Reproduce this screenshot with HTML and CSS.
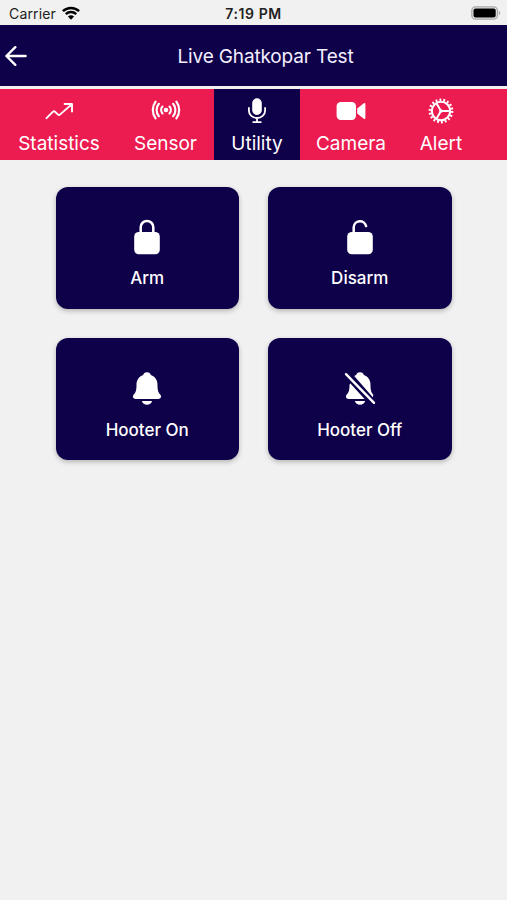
FILE: index.html
```html
<!DOCTYPE html>
<html lang="en">
<head>
    <meta charset="utf-8">
    <title>Live Ghatkopar Test</title>
    <link rel="stylesheet" href="styles.css">
</head>
<body>
<div class="status">
    <div class="carrier">
        <span>Carrier</span>
        <svg width="18" height="14" viewBox="0 0 18 14" fill="none" stroke="#000" stroke-width="2.5">
            <path d="M.9 5.1a11.8 11.8 0 0 1 16.2 0"/>
            <path d="M3.8 8.2a7.5 7.5 0 0 1 10.4 0"/>
            <path d="M9 13.7L5.9 10.6a4.5 4.5 0 0 1 6.2 0z" fill="#000" stroke="none"/>
        </svg>
    </div>
    <div class="time">7:19 PM</div>
    <div class="battery">
        <svg width="30" height="14" viewBox="0 0 30 14">
            <rect x=".8" y=".8" width="25.6" height="12.4" rx="3.8" fill="#e6e6e6" stroke="#aaa" stroke-width="1.3"/>
            <rect x="2.5" y="2.5" width="22.2" height="9" rx="2" fill="#000"/>
            <path d="M27.8 4.8c2 .8 2 3.6 0 4.4z" fill="#aaa"/>
        </svg>
    </div>
</div>

<div class="header">
    <svg class="back" width="22" height="20" viewBox="0 0 22 20" fill="none" stroke="#fff" stroke-width="2.4" stroke-linecap="round" stroke-linejoin="round">
        <path d="M10.3 1.2L1.4 10l8.9 8.8M1.8 10h18.8"/>
    </svg>
    <h1>Live Ghatkopar Test</h1>
</div>

<div class="tabs">
    <div class="tab statistics">
        <svg width="28" height="26" viewBox="0 0 28 26" fill="none" stroke="#fff" stroke-width="1.9" stroke-linecap="round" stroke-linejoin="round">
            <path d="M1.500 20.200l6.300-6.400q1.200-1.200 2.400 0l2.600 2.600q1.200 1.200 2.400 0L26.600 6.400M19.600 6h7.400v7.500"/>
        </svg>
        <span>Statistics</span>
    </div>
    <div class="tab sensor">
        <svg width="30" height="26" viewBox="0 0 30 26" fill="none" stroke="#fff" stroke-width="2.2" stroke-linecap="round">
            <circle cx="15" cy="12" r="2.3" fill="#fff" stroke="none"/>
            <path d="M11.500 8.600a5 5 0 0 0 0 6.800M18.500 8.600a5 5 0 0 1 0 6.800"/>
            <path d="M7.900 5.800a9.500 9.500 0 0 0 0 12.400M22.100 5.800a9.500 9.500 0 0 1 0 12.400"/>
            <path d="M4.600 3.600a14 14 0 0 0 0 16.800M25.400 3.600a14 14 0 0 1 0 16.800"/>
        </svg>
        <span>Sensor</span>
    </div>
    <div class="tab utility active">
        <svg width="20" height="26" viewBox="0 0 20 26" fill="none" stroke="#fff" stroke-width="1.8" stroke-linecap="round">
            <rect x="5.200" y=".3" width="9.600" height="16.700" rx="4.800" fill="#fff" stroke="none"/>
            <path d="M1.900 10v2.800a8.100 7.200 0 0 0 16.200 0V10M10 20v4M6.200 24.100h7.600"/>
        </svg>
        <span>Utility</span>
    </div>
    <div class="tab camera">
        <svg width="30" height="26" viewBox="0 0 30 26" fill="#fff">
            <rect x=".6" y="4" width="19.400" height="18" rx="4.200"/>
            <path d="M21.200 10.500l6.600-5.200q1.600-.8 1.600.8v13.800q0 1.600-1.600.8l-6.600-5.200z"/>
        </svg>
        <span>Camera</span>
    </div>
    <div class="tab alert">
        <svg width="26" height="26" viewBox="0 0 26 26" fill="none" stroke="#fff">
            <circle cx="13" cy="13" r="11.200" stroke-width="2.400" stroke-dasharray="1.900 2.010"/>
            <circle cx="13" cy="13" r="9.200" stroke-width="2.100"/>
            <path d="M13 13h8.500M13 13L8.600 5.400M13 13l-4.400 7.600" stroke-width="2"/>
            <circle cx="13" cy="13" r="1.800" fill="#fff" stroke="none"/>
        </svg>
        <span>Alert</span>
    </div>
</div>

<div class="cards">
    <div class="card">
        <svg width="36" height="36" viewBox="0 0 36 36" fill="none" stroke="#fff" stroke-width="2.5">
            <path d="M11.7 14V8.200a6.300 6.300 0 0 1 12.600 0V14"/>
            <rect x="5.2" y="13" width="25.6" height="22.3" rx="4.5" fill="#fff" stroke="none"/>
        </svg>
        <span>Arm</span>
    </div>
    <div class="card">
        <svg width="36" height="36" viewBox="0 0 36 36" fill="none" stroke="#fff" stroke-width="2.5" stroke-linecap="round">
            <path d="M11.7 14V8.200a6.300 6.300 0 0 1 12.400-1.100"/>
            <rect x="5.2" y="13" width="25.6" height="22.3" rx="4.5" fill="#fff" stroke="none"/>
        </svg>
        <span>Disarm</span>
    </div>
    <div class="card">
        <svg width="36" height="36" viewBox="0 0 36 36" fill="#fff">
            <path d="M18 2.2c2.2 0 3.4 1.2 3.9 2.9 4.2 1.5 6.6 5.2 6.6 9.8 0 5.3.8 7.4 2.7 9.7 1.8 2.2.6 4.3-1.7 4.3H6.5c-2.3 0-3.5-2.1-1.7-4.3 1.9-2.3 2.7-4.4 2.7-9.7 0-4.6 2.4-8.3 6.6-9.8.5-1.7 1.7-2.9 3.9-2.9z"/>
            <path d="M12.8 31h10.4c-.7 2.2-2.7 3.8-5.2 3.8s-4.5-1.600-5.200-3.800z"/>
        </svg>
        <span>Hooter On</span>
    </div>
    <div class="card">
        <svg width="36" height="36" viewBox="0 0 36 36" fill="#fff">
            <path d="M18 2.2c2.200 0 3.400 1.200 3.900 2.900 4.200 1.500 6.600 5.200 6.600 9.800 0 5.300.8 7.400 2.700 9.700L31 27.500 12.200 6.100l1.900-1C14.600 3.400 15.800 2.200 18 2.200z"/>
            <path d="M8.400 13.400L22.600 28.900H6.500c-2.300 0-3.500-2.100-1.700-4.300 1.900-2.300 2.700-4.400 2.700-9.700q0-.8.9-1.500z"/>
            <path d="M12.800 31h10.400c-.7 2.200-2.700 3.800-5.200 3.800s-4.500-1.600-5.200-3.800z"/>
            <path d="M4 4.200l28 28.600" stroke="#0f004a" stroke-width="5.200"/>
            <path d="M4 4.200l28 28.600" stroke="#fff" stroke-width="2.400" stroke-linecap="round"/>
        </svg>
        <span>Hooter Off</span>
    </div>
</div>
</body>
</html>
```
FILE: styles.css
```css
body {
    margin: 0;
    height: 900px;
    overflow: hidden;
    background: #f1f1f1;
    font-family: Inter, "Liberation Sans", sans-serif;
}

svg {
    display: block;
}

.status {
    display: grid;
    grid-template-columns: 1fr auto 1fr;
    align-items: center;
    height: 25px;
    padding: 1px 6px 0 9px;
    box-sizing: border-box;
    font-size: 14px;
    color: #222;
}

.carrier {
    display: flex;
    align-items: center;
    gap: 6px;
    letter-spacing: .15px;
}

.time {
    padding-right: 3px;
    font-weight: 600;
    letter-spacing: .6px;
}

.battery {
    justify-self: end;
}

.header {
    display: grid;
    grid-template-columns: 22px 1fr 22px;
    align-items: center;
    height: 61px;
    padding: 0 5px;
    background: #0f004a;
}

h1 {
    margin: 0;
    padding: 2px 0 0 24px;
    text-align: center;
    font-size: 19px;
    font-weight: 400;
    letter-spacing: -.15px;
    color: #f3efff;
}

.tabs {
    display: flex;
    height: 71px;
    margin-top: 3px;
    background: #ec1b50;
}

.tab {
    display: flex;
    flex-direction: column;
    align-items: center;
    gap: 8px;
    padding-top: 9px;
    box-sizing: border-box;
    font-size: 19px;
    line-height: 24px;
    color: #fff;
}

.statistics {
    width: 118px;
}

.sensor {
    width: 95px;
}

.utility {
    width: 86px;
    margin-left: 1px;
}

.camera {
    width: 102px;
}

.alert {
    width: 78px;
}

.active {
    background: #0f004a;
}

.cards {
    display: grid;
    grid-template-columns: 183.5px 183.5px;
    grid-auto-rows: 122px;
    gap: 29.5px 29px;
    justify-content: center;
    padding-top: 26.5px;
}

.card {
    display: flex;
    flex-direction: column;
    align-items: center;
    gap: 11.5px;
    padding-top: 32px;
    box-sizing: border-box;
    border-radius: 12px;
    background: #0f004a;
    box-shadow: 0 2px 5px rgba(0, 0, 0, .25);
    font-size: 17px;
    font-weight: 500;
    line-height: 24px;
    color: #fff;
}
```
